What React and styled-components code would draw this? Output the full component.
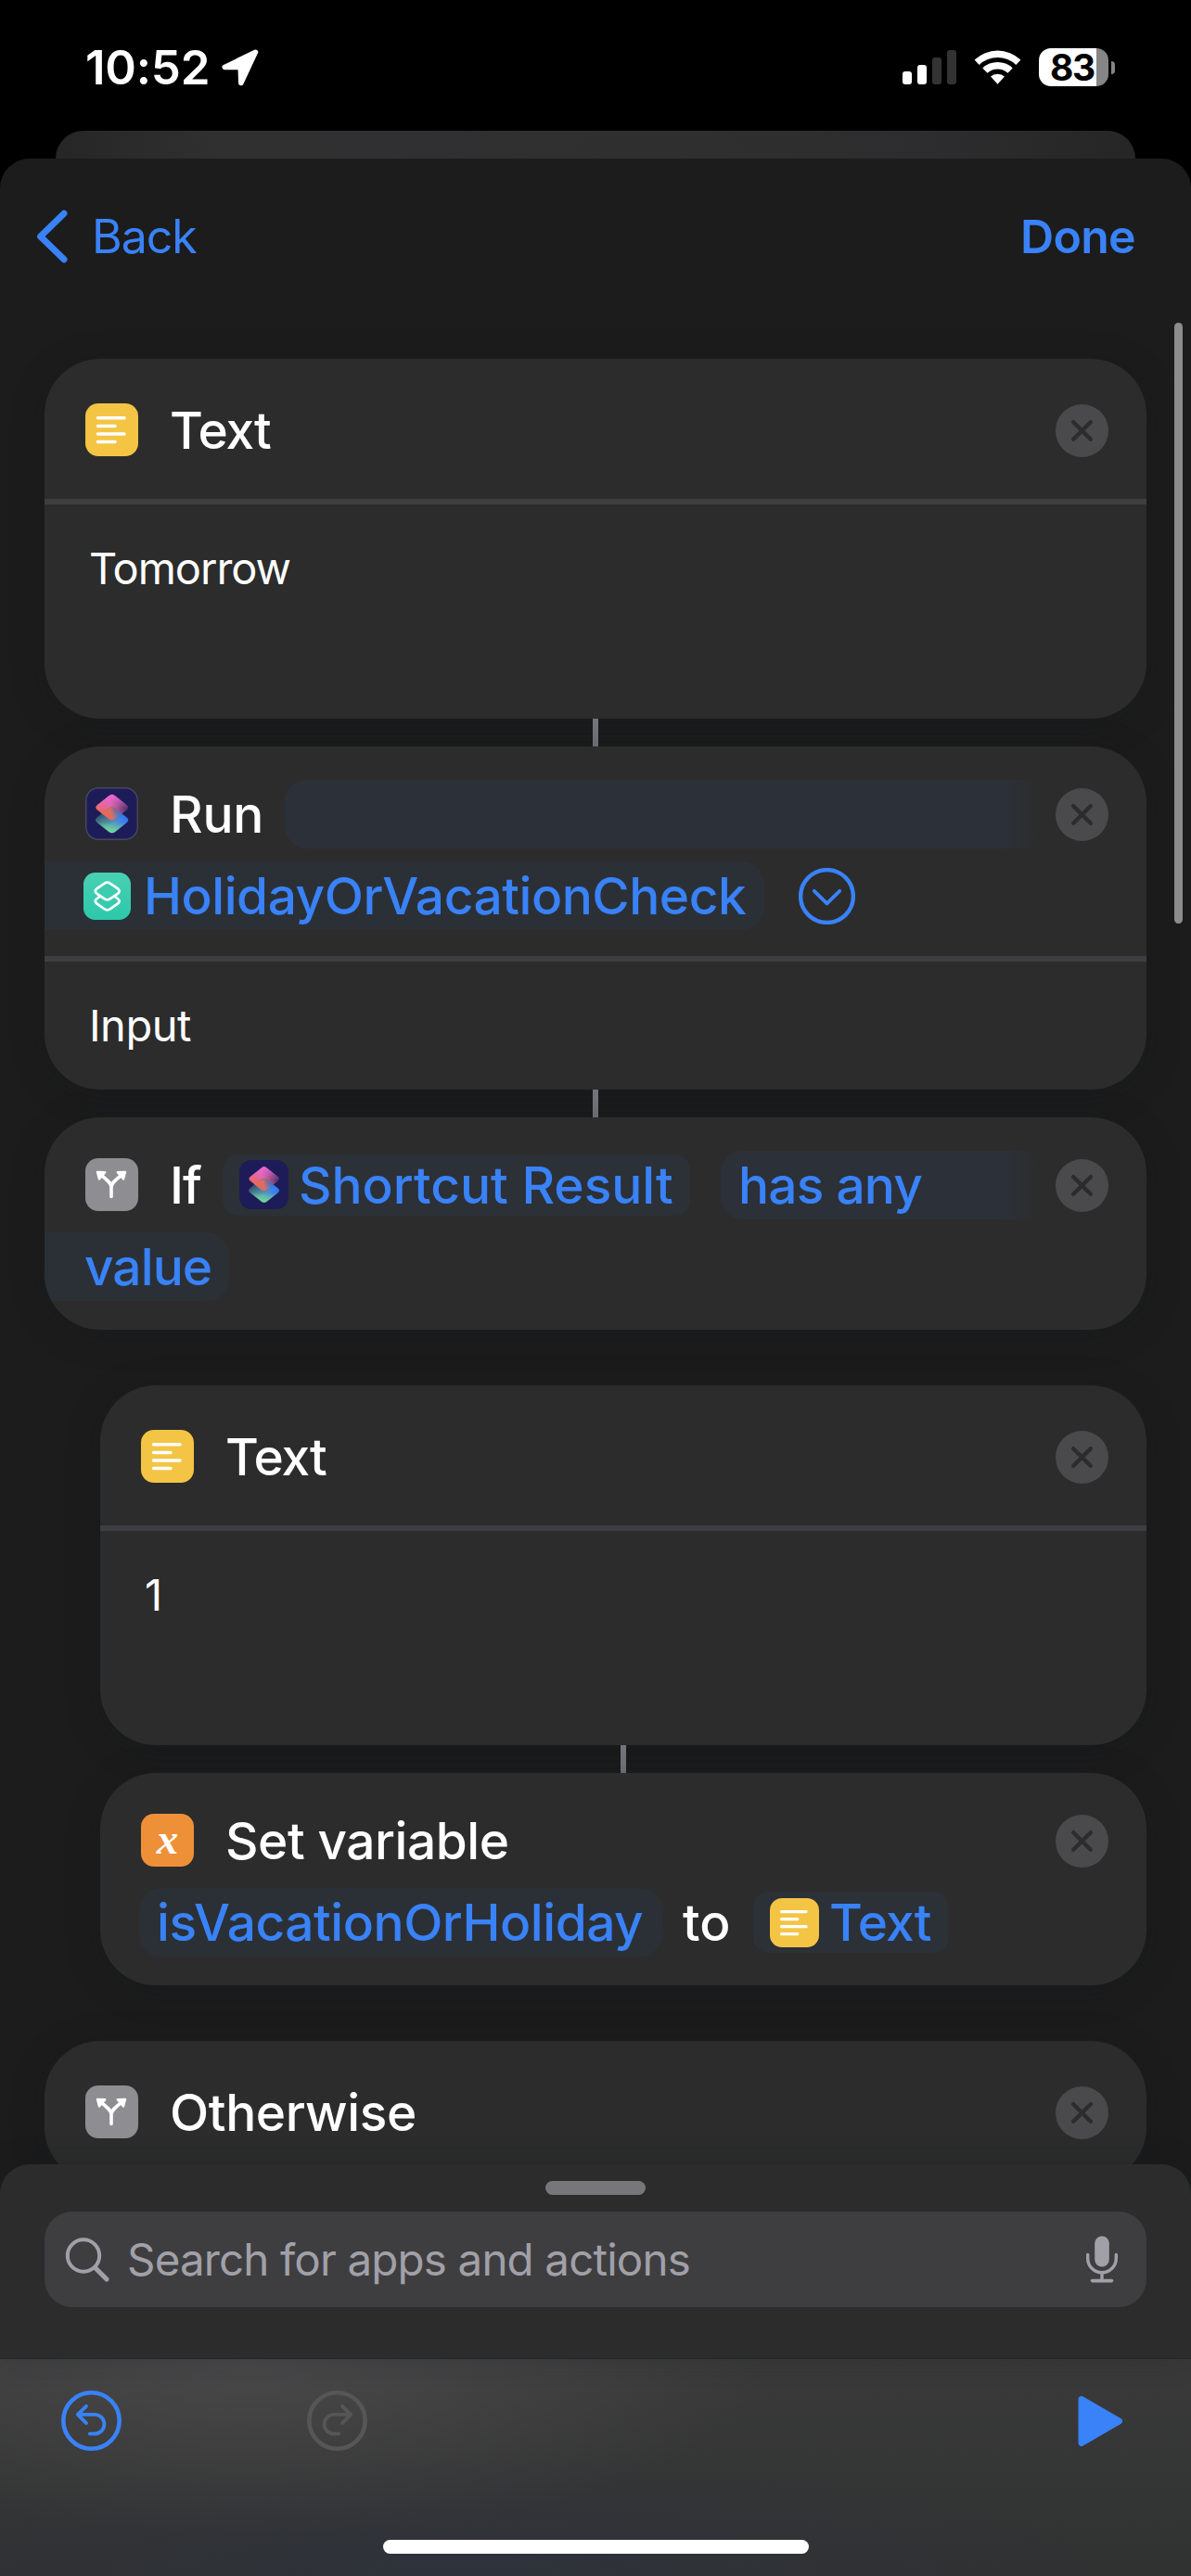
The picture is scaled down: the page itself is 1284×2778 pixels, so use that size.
import React from "react";
import styled, { createGlobalStyle } from "styled-components";

const Global = createGlobalStyle`
  * { box-sizing: border-box; }
  html, body { margin: 0; padding: 0; background: #000; }
  body { font-family: Inter, "Liberation Sans", sans-serif; -webkit-font-smoothing: antialiased; }
  button { appearance: none; border: 0; padding: 0; background: none; font: inherit; color: inherit; }
  svg { display: block; flex: none; }
`;

const BLUE = "#3982f8";

const Screen = styled.div`
  width: 1284px;
  height: 2778px;
  display: flex;
  flex-direction: column;
  overflow: hidden;
  background: #000;
  color: #fff;
`;

const StatusBar = styled.header`
  height: 141px;
  flex: none;
  display: flex;
  align-items: flex-start;
  justify-content: space-between;
  padding: 52px 82px 0 92px;
`;

const StatusGroup = styled.div`
  display: flex;
  align-items: center;
  height: 41px;
`;

const Clock = styled.span`
  width: 147px;
  font-size: 51px;
  font-weight: 600;
  line-height: 41px;
  letter-spacing: -0.2px;
  white-space: nowrap;
`;

const Signal = styled.div`
  display: flex;
  align-items: flex-end;
  gap: 6px;
  height: 37px;
  margin-right: 19px;
`;

const SignalBar = styled.i`
  width: 10px;
  height: ${(p) => p.$h}px;
  border-radius: 3px;
  background: ${(p) => (p.$on ? "#fff" : "#333")};
`;

const Battery = styled.div`
  width: 75px;
  height: 41px;
  margin-left: 19px;
  border-radius: 13px;
  background: linear-gradient(to right, #fff 62px, #868686 62px);
  color: #000;
  font-size: 39px;
  font-weight: 700;
  line-height: 41px;
  letter-spacing: -1.4px;
  padding-left: 12px;
`;

const BatteryTip = styled.i`
  width: 4px;
  height: 14px;
  margin-left: 3px;
  border-radius: 0 5px 5px 0;
  background: #868686;
`;

const BackSheet = styled.div`
  height: 30px;
  flex: none;
  margin: 0 60px;
  border-radius: 30px 30px 0 0;
  background: linear-gradient(to right, #262626, #303030 15%, #303032 30%, #2f2f2f 60%, #2d2d2f 80%, #262626);
`;

const Sheet = styled.main`
  flex: 1;
  min-height: 0;
  display: flex;
  flex-direction: column;
  position: relative;
  border-radius: 32px 32px 0 0;
  background: #1c1c1c;
  overflow: hidden;
`;

const NavBar = styled.nav`
  height: 168px;
  flex: none;
  display: flex;
  align-items: center;
  justify-content: space-between;
  padding: 0 60px 0 39px;
  color: ${BLUE};
  font-size: 50px;
  line-height: 60px;
`;

const BackButton = styled.button`
  display: flex;
  align-items: center;
  gap: 26px;
  letter-spacing: -1px;
`;

const DoneButton = styled.button`
  font-weight: 600;
  letter-spacing: -0.7px;
`;

const Flow = styled.section`
  flex: 1;
  min-height: 0;
  overflow: hidden;
  display: flex;
  flex-direction: column;
  padding: 48px 48px 0;
`;

const Scrollbar = styled.div`
  position: absolute;
  top: 177px;
  right: 9px;
  width: 9px;
  height: 648px;
  border-radius: 5px;
  background: #8c8c8c;
`;

const Card = styled.article`
  flex: none;
  height: ${(p) => p.$h}px;
  margin: ${(p) => p.$gap || 0}px 0 0 ${(p) => (p.$nested ? 60 : 0)}px;
  border-radius: 60px;
  background: #2c2c2c;
  box-shadow: 0 6px 36px rgba(20, 22, 30, 0.3);
  overflow: hidden;
`;

const Head = styled.div`
  padding-top: ${(p) => (p.$tall ? 32.5 : 28.5)}px;
  height: ${(p) => p.$h}px;
`;

const Line = styled.div`
  height: 88.5px;
  display: flex;
  align-items: center;
  padding: 0 41px 0 ${(p) => (p.$bleed ? 0 : p.$inset ? 42 : 44)}px;
  font-size: 55px;
  font-weight: 500;
  white-space: nowrap;
`;

const Word = styled.span`
  width: ${(p) => p.$w}px;
  flex: none;
  letter-spacing: ${(p) => p.$ls || 0}px;
  margin-left: ${(p) => p.$ml || 0}px;
`;

const Spacer = styled.i`
  flex: 1;
`;

const Pill = styled.span`
  display: flex;
  align-items: center;
  flex: ${(p) => (p.$w ? "none" : "1")};
  width: ${(p) => (p.$w ? p.$w + "px" : "auto")};
  height: ${(p) => (p.$small ? 66 : 74)}px;
  margin-left: ${(p) => p.$ml || 0}px;
  margin-right: ${(p) => (p.$fade ? 18 : 0)}px;
  padding-left: ${(p) => p.$pl || 0}px;
  border-radius: ${(p) =>
    p.$small ? "16px" : p.$fade ? "24px 0 0 24px" : p.$cont ? "0 24px 24px 0" : "24px"};
  background: ${(p) =>
    p.$fade
      ? "linear-gradient(to right, #2c3038 calc(100% - 36px), #2c2c2c)"
      : p.$small ? "#2c3037" : "#2b3037"};
  color: ${BLUE};
  letter-spacing: ${(p) => p.$ls || 0}px;
`;

const Divider = styled.hr`
  height: 6px;
  margin: 0;
  border: 0;
  background: #3e3e40;
`;

const Value = styled.p`
  margin: 0;
  padding: 40px 48px 0;
  font-size: 47px;
  line-height: 58px;
  letter-spacing: ${(p) => p.$ls || 0}px;
`;

const Connector = styled.div`
  flex: none;
  align-self: center;
  width: 6px;
  height: 30px;
  margin-left: ${(p) => (p.$nested ? 60 : 0)}px;
  background: #73757b;
`;

const Tile = styled.span`
  flex: none;
  width: ${(p) => p.$s || 57}px;
  height: ${(p) => p.$s || 57}px;
  margin-right: ${(p) => (p.$mr === undefined ? 34 : p.$mr)}px;
  border-radius: ${(p) => ((p.$s || 57) * 14) / 57}px;
  background: ${(p) => p.$bg};
  box-shadow: ${(p) => (p.$ring ? "inset 0 0 0 1.5px #46465c" : "none")};
  display: flex;
  align-items: center;
  justify-content: center;
`;

const VarGlyph = styled.span`
  font-family: "Liberation Serif", serif;
  font-style: italic;
  font-weight: 700;
  font-size: 47px;
  line-height: 40px;
  margin-top: -3px;
  color: #fff;
`;

const Panel = styled.section`
  flex: none;
  height: 209px;
  margin-top: -32px;
  position: relative;
  display: flex;
  flex-direction: column;
  align-items: stretch;
  padding: 18px 48px 0;
  border-radius: 32px 32px 0 0;
  background: #2c2c2c;
  box-shadow: 0 0 30px rgba(20, 22, 30, 0.25);
`;

const Grabber = styled.i`
  align-self: center;
  width: 108px;
  height: 15px;
  border-radius: 8px;
  background: #77767b;
`;

const SearchField = styled.div`
  height: 103px;
  margin-top: 18px;
  display: flex;
  align-items: center;
  padding: 0 30px 0 22px;
  border-radius: 30px;
  background: #3e3e40;
  color: #a1a0a8;
  font-size: 47.5px;
`;

const Placeholder = styled.span`
  flex: 1;
  margin-left: 17px;
  letter-spacing: -0.85px;
`;

const Toolbar = styled.footer`
  flex: none;
  height: 235px;
  display: flex;
  flex-direction: column;
  align-items: center;
  justify-content: space-between;
  padding: 34px 0 24px;
  border-top: 1px solid #272727;
  background:
    radial-gradient(ellipse 560px 190px at 270px 0, rgba(76, 76, 77, 0.8), rgba(76, 76, 77, 0)),
    radial-gradient(ellipse 700px 120px at 500px 234px, rgba(46, 51, 60, 0.9), rgba(46, 51, 60, 0)),
    linear-gradient(#3a3a3a, #303131);
`;

const Tools = styled.div`
  align-self: stretch;
  display: flex;
  align-items: center;
  padding: 0 73px 0 66px;
`;

const HomeIndicator = styled.i`
  width: 459px;
  height: 15px;
  border-radius: 8px;
  background: #fff;
`;

const LinesIcon = ({ s = 57, mr }) => (
  <Tile $bg="#f4c444" $s={s} $mr={mr}>
    <svg width={s} height={s} viewBox="0 0 57 57" stroke="#fff" strokeWidth="3.5" strokeLinecap="round">
      <path d="M13.5 15.7H42M13.5 24.4H32M13.5 33H42M13.5 41.6H32" />
    </svg>
  </Tile>
);

const ForkIcon = () => (
  <Tile $bg="#8e8d92">
    <svg width="57" height="57" viewBox="0 0 57 57">
      <path d="M28 41.5V31C28 27 24 24 17.5 18.5M28 31C28 27 32 24 38.5 18.5" fill="none" stroke="#fff" strokeWidth="3.6" strokeLinecap="round" />
      <path d="M13 15L21.2 15.2L15 22.5ZM43 15L34.8 15.2L41 22.5Z" fill="#fff" stroke="#fff" strokeWidth="2.4" strokeLinejoin="round" />
    </svg>
  </Tile>
);

const ShortcutsIcon = ({ s = 57, mr, id, ring }) => (
  <Tile $bg="#1d1c58" $s={s} $mr={mr} $ring={ring}>
    <svg width={s} height={s} viewBox="0 0 57 57">
      <defs>
        <linearGradient id={id + "t"} x1="0.05" y1="0.7" x2="0.95" y2="0.45">
          <stop offset="0" stopColor="#ee6a50" />
          <stop offset="0.5" stopColor="#d8669a" />
          <stop offset="1" stopColor="#4a2f68" />
        </linearGradient>
        <linearGradient id={id + "p"} x1="0.45" y1="0" x2="0.5" y2="0.6">
          <stop offset="0" stopColor="#ee68d8" />
          <stop offset="1" stopColor="#ee68d8" stopOpacity="0" />
        </linearGradient>
        <linearGradient id={id + "b"} x1="0.2" y1="0.75" x2="0.9" y2="0.4">
          <stop offset="0" stopColor="#66c2a0" />
          <stop offset="0.45" stopColor="#5599c4" />
          <stop offset="1" stopColor="#3578f2" />
        </linearGradient>
        <linearGradient id={id + "d"} x1="0" y1="0.3" x2="0.4" y2="0.75">
          <stop offset="0" stopColor="#2b3f70" />
          <stop offset="1" stopColor="#2b3f70" stopOpacity="0" />
        </linearGradient>
        <linearGradient id={id + "g"} x1="0.5" y1="0.6" x2="0.5" y2="1">
          <stop offset="0" stopColor="#70e090" stopOpacity="0" />
          <stop offset="1" stopColor="#78dc98" stopOpacity="0.9" />
        </linearGradient>
        <linearGradient id={id + "o"} x1="0.1" y1="0.5" x2="0.95" y2="0.4">
          <stop offset="0" stopColor="#ea6a54" />
          <stop offset="0.45" stopColor="#dc6c64" />
          <stop offset="1" stopColor="#6f86c8" stopOpacity="0" />
        </linearGradient>
        <path id={id + "s"} d="M25.4 9.3Q28.8 6.3 32.2 9.3L44.6 19Q48 21.8 44.6 24.6L32.2 34.3Q28.8 37 25.4 34.3L13 24.6Q9.6 21.8 13 19Z" />
      </defs>
      <use href={`#${id}s`} fill={`url(#${id}t)`} />
      <use href={`#${id}s`} fill={`url(#${id}p)`} />
      <use href={`#${id}s`} y="13.6" fill={`url(#${id}b)`} />
      <use href={`#${id}s`} y="13.6" fill={`url(#${id}d)`} />
      <use href={`#${id}s`} y="13.6" fill={`url(#${id}g)`} />
      <path d="M16.6 28.4L16.9 27.7L25.4 34.3Q28.8 37 32.2 34.3L40.7 27.7L32.2 22.9Q28.8 20 25.4 22.9L17.4 27.8Z" fill={`url(#${id}o)`} />
    </svg>
  </Tile>
);

const GreenIcon = () => (
  <Tile $bg="linear-gradient(#49d0b4, #2cc8aa)" $s={51} $mr={14}>
    <svg width="51" height="51" viewBox="0 0 51 51" stroke="#fff" strokeWidth="2.7" strokeLinejoin="round">
      <path d="M22.4 22.4Q25.7 20 29 22.4L36.8 28Q40.6 30.8 36.8 33.6L29 39.2Q25.7 41.6 22.4 39.2L14.6 33.6Q10.8 30.8 14.6 28Z" fill="none" />
      <path d="M22.4 11.8Q25.7 9.4 29 11.8L36.8 17.2Q40.6 20 36.8 22.8L29 28.2Q25.7 30.6 22.4 28.2L14.6 22.8Q10.8 20 14.6 17.2Z" fill="#3dccb0" />
    </svg>
  </Tile>
);

const VariableIcon = () => (
  <Tile $bg="#ed9038">
    <VarGlyph>x</VarGlyph>
  </Tile>
);

const CloseButton = styled.button`
  flex: none;
  width: 57px;
  height: 57px;
  margin-top: 2px;
  border-radius: 50%;
  background: #4a4a4c;
`;

const Close = () => (
  <CloseButton aria-label="Remove">
    <svg width="57" height="57" viewBox="0 0 57 57" stroke="#2c2c2c" strokeWidth="4.4" strokeLinecap="round">
      <path d="M19.2 19.2L37.8 37.8M37.8 19.2L19.2 37.8" />
    </svg>
  </CloseButton>
);

const TextCard = ({ value, ...rest }) => (
  <Card $h={388} {...rest}>
    <Head $tall $h={151}>
      <Line>
        <LinesIcon />
        <Word $ls={-1.1}>Text</Word>
        <Spacer />
        <Close />
      </Line>
    </Head>
    <Divider />
    <Value $ls={-1.05}>{value}</Value>
  </Card>
);

const TurnIcon = ({ color, flip }) => (
  <svg width="65" height="65" viewBox="0 0 65 65" fill="none" stroke={color} strokeLinecap="round" strokeLinejoin="round">
    <circle cx="32.5" cy="32.5" r="30.2" strokeWidth="4.6" />
    <path transform={flip ? "translate(65 0) scale(-1 1)" : undefined} strokeWidth="3.8" d="M27 16.8L17.8 25.8L27 35.2M18.5 25.8H36A10.4 10.4 0 0 1 36 46.6H30.8" />
  </svg>
);

export default function App() {
  return (
    <Screen>
      <Global />
      <StatusBar>
        <StatusGroup>
          <Clock>10:52</Clock>
          <svg width="40" height="40" viewBox="0 0 40 40">
            <path d="M36.5 3.2L3.2 19.4H20.2L20.8 36.5Z" fill="#fff" stroke="#fff" strokeWidth="5.5" strokeLinejoin="round" />
          </svg>
        </StatusGroup>
        <StatusGroup>
          <Signal>
            <SignalBar $h={14} $on />
            <SignalBar $h={21} $on />
            <SignalBar $h={29} />
            <SignalBar $h={37} />
          </Signal>
          <svg width="51" height="37" viewBox="0 0 51 37">
            <path d="M0.6 10.6A36 36 0 0 1 50.4 10.6L45.3 15.9A28.6 28.6 0 0 0 5.7 15.9Z" fill="#fff" />
            <path d="M9.3 19.4A23.4 23.4 0 0 1 41.7 19.4L36.5 24.8A16 16 0 0 0 14.5 24.8Z" fill="#fff" />
            <path d="M18 28.6A11 11 0 0 1 33 28.6L25.5 36.8Z" fill="#fff" />
          </svg>
          <Battery>83</Battery>
          <BatteryTip />
        </StatusGroup>
      </StatusBar>
      <BackSheet />
      <Sheet>
        <NavBar>
          <BackButton>
            <svg width="34" height="58" viewBox="0 0 34 58" fill="none" stroke={BLUE} strokeWidth="7" strokeLinecap="round" strokeLinejoin="round">
              <path d="M30 4.2L4.6 29L30 53.8" />
            </svg>
            Back
          </BackButton>
          <DoneButton>Done</DoneButton>
        </NavBar>
        <Flow>
          <TextCard value="Tomorrow" />
          <Connector />
          <Card $h={370}>
            <Head $h={226}>
              <Line>
                <ShortcutsIcon id="run" ring />
                <Word $w={124} $ls={-0.2}>Run</Word>
                <Pill $fade />
                <Close />
              </Line>
              <Line $bleed>
                <Pill $cont $w={776} $pl={42} $ls={-0.45}>
                  <GreenIcon />
                  HolidayOrVacationCheck
                </Pill>
                <Word $ml={37}>
                  <svg width="61" height="61" viewBox="0 0 61 61" fill="none" stroke={BLUE} strokeLinecap="round" strokeLinejoin="round">
                    <circle cx="30.5" cy="30.5" r="28.4" strokeWidth="4.4" />
                    <path d="M16.8 24.8L30.5 38.4L44.2 24.8" strokeWidth="3.8" />
                  </svg>
                </Word>
              </Line>
            </Head>
            <Divider />
            <Value $ls={-0.5}>Input</Value>
          </Card>
          <Connector />
          <Card $h={229}>
            <Head>
              <Line>
                <ForkIcon />
                <Word $w={57} $ls={-1}>If</Word>
                <Pill $small $w={504} $pl={18}>
                  <ShortcutsIcon id="res" s={53} mr={11} />
                  Shortcut Result
                </Pill>
                <Pill $fade $ml={33} $pl={19} $ls={-0.8}>has any</Pill>
                <Close />
              </Line>
              <Line $bleed>
                <Pill $cont $w={199} $pl={43} $ls={-0.9}>value</Pill>
              </Line>
            </Head>
          </Card>
          <TextCard $nested $gap={60} value="1" />
          <Connector $nested />
          <Card $h={229} $nested>
            <Head>
              <Line>
                <VariableIcon />
                <Word $ls={-0.45}>Set variable</Word>
                <Spacer />
                <Close />
              </Line>
              <Line $inset>
                <Pill $w={564} $pl={19} $ls={-0.45}>isVacationOrHoliday</Pill>
                <Word $ml={22} $w={76}>to</Word>
                <Pill $small $w={211} $pl={18} $ls={-0.9}>
                  <LinesIcon s={53} mr={11} />
                  Text
                </Pill>
              </Line>
            </Head>
          </Card>
          <Card $h={153} $gap={60}>
            <Head $tall>
              <Line>
                <ForkIcon />
                <Word $ls={-0.4}>Otherwise</Word>
                <Spacer />
                <Close />
              </Line>
            </Head>
          </Card>
        </Flow>
        <Scrollbar />
        <Panel>
          <Grabber />
          <SearchField>
            <svg width="50" height="50" viewBox="0 0 50 50" fill="none" stroke="#a1a0a8" strokeLinecap="round">
              <circle cx="20" cy="20.5" r="17.2" strokeWidth="4" />
              <path d="M33 34L45 46" strokeWidth="5.2" />
            </svg>
            <Placeholder>Search for apps and actions</Placeholder>
            <svg width="36" height="51" viewBox="0 0 36 51" fill="none" stroke="#a1a0a8" strokeLinecap="round">
              <rect x="10.2" y="0.5" width="15.6" height="33" rx="7.8" fill="#a1a0a8" stroke="none" />
              <path d="M2.7 20.5V24.5A15.3 15.3 0 0 0 33.3 24.5V20.5M18 41V48" strokeWidth="3.4" />
              <path d="M7.5 48.6H28.5" strokeWidth="3.6" />
            </svg>
          </SearchField>
        </Panel>
        <Toolbar>
          <Tools>
            <TurnIcon color={BLUE} />
            <Word $ml={200}>
              <TurnIcon color="#565657" flip />
            </Word>
            <Spacer />
            <svg width="49" height="56" viewBox="0 0 49 56">
              <path d="M4 4.5L44.5 28L4 51.5Z" fill={BLUE} stroke={BLUE} strokeWidth="7" strokeLinejoin="round" />
            </svg>
          </Tools>
          <HomeIndicator />
        </Toolbar>
      </Sheet>
    </Screen>
  );
}
